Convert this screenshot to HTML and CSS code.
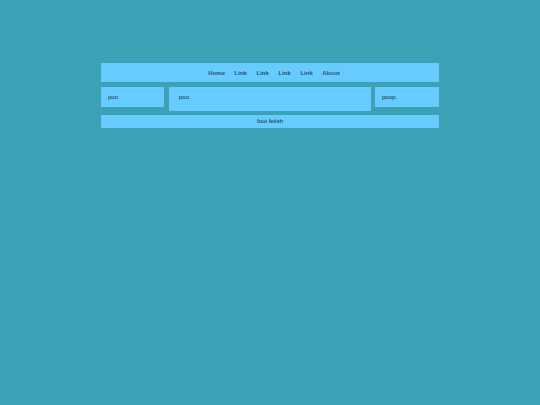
FILE: index.html
```html
<!DOCTYPE html>
<html>
<head>
<meta charset="utf-8">
<link rel="stylesheet" href="styles.css">
</head>
<body>
<div class="wrap">
  <header class="header">
    <nav class="nav">
      <a class="nav-link">Home</a>
      <a class="nav-link">Link</a>
      <a class="nav-link">Link</a>
      <a class="nav-link">Link</a>
      <a class="nav-link">Link</a>
      <a class="nav-link">About</a>
    </nav>
  </header>
  <div class="row">
    <aside class="box side-left">poo</aside>
    <main class="box main">poo.</main>
    <aside class="box side-right">poop.</aside>
  </div>
  <footer class="footer">foot fetish</footer>
</div>
</body>
</html>
```
FILE: styles.css
```css
html, body {
  margin: 0;
  padding: 0;
}
body {
  background: #3ba3b5;
  font-family: "Liberation Sans", Arial, sans-serif;
  font-size: 6px;
  color: #1a2535;
  width: 540px;
  height: 405px;
}
.wrap {
  width: 338px;
  margin: 63px 0 0 101px;
}
.header {
  height: 19px;
  background: #66ccff;
  display: flex;
  align-items: center;
  justify-content: center;
}
.nav {
  display: flex;
  padding-left: 8px;
  padding-top: 1px;
}
.nav-link {
  font-weight: bold;
  color: #2f4f6d;
  padding: 0 4.8px;
}
.row {
  display: flex;
  align-items: flex-start;
  margin-top: 5px;
}
.box {
  background: #66ccff;
  line-height: 20px;
  box-sizing: border-box;
}
.side-left {
  width: 63px;
  height: 20px;
  padding-left: 7px;
}
.main {
  width: 202px;
  height: 24px;
  margin-left: 5px;
  padding-left: 10px;
  line-height: 21px;
}
.side-right {
  width: 64px;
  height: 20px;
  margin-left: 4px;
  padding-left: 7px;
}
.footer {
  margin-top: 4px;
  height: 13px;
  line-height: 13px;
  background: #66ccff;
  text-align: center;
}
```
